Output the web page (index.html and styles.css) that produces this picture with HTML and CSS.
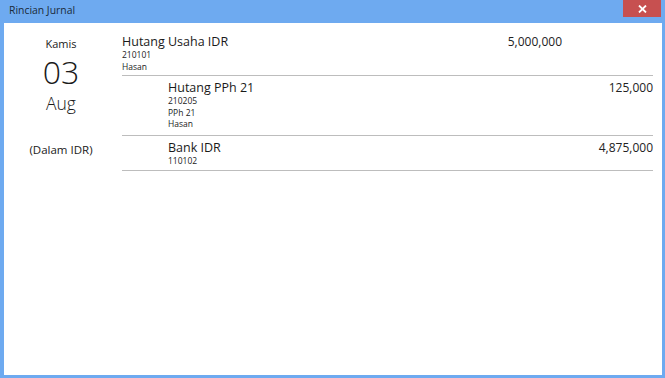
FILE: index.html
```html
<!DOCTYPE html>
<html lang="id">
<head>
  <meta charset="UTF-8">
  <title>Rincian Jurnal</title>
  <link rel="stylesheet" href="styles.css">
</head>
<body>
  <div class="window">
    <div class="title-bar">
      <span class="title">Rincian Jurnal</span>
      <button class="close" title="Tutup">
        <svg width="9" height="8" viewBox="0 0 9 8">
          <path d="M1 0.5 L8 7.5 M8 0.5 L1 7.5" stroke="#fff" stroke-width="1.8" fill="none"/>
        </svg>
      </button>
    </div>

    <div class="content">
      <div class="date">
        <div class="day-name">Kamis</div>
        <div class="day">03</div>
        <div class="month">Aug</div>
        <div class="currency">(Dalam IDR)</div>
      </div>

      <div class="entries">
        <div class="entry">
          <div class="account">
            <div class="name">Hutang Usaha IDR</div>
            <div class="sub">210101</div>
            <div class="sub">Hasan</div>
          </div>
          <div class="debit">5,000,000</div>
          <div class="credit"></div>
        </div>

        <div class="entry kredit">
          <div class="account">
            <div class="name">Hutang PPh 21</div>
            <div class="sub">210205</div>
            <div class="sub">PPh 21</div>
            <div class="sub">Hasan</div>
          </div>
          <div class="debit"></div>
          <div class="credit">125,000</div>
        </div>

        <div class="entry kredit">
          <div class="account">
            <div class="name">Bank IDR</div>
            <div class="sub">110102</div>
          </div>
          <div class="debit"></div>
          <div class="credit">4,875,000</div>
        </div>
      </div>
    </div>
  </div>
</body>
</html>
```

FILE: styles.css
```css
html, body {
  margin: 0;
  height: 100%;
}
body {
  font-family: 'Open Sans', 'Noto Sans', sans-serif;
  background: #6eaaf0;
  color: #111;
}
.window {
  display: flex;
  flex-direction: column;
  height: 100%;
}
.title-bar {
  height: 23px;
  display: flex;
  align-items: flex-start;
  justify-content: space-between;
  padding: 0 4px 0 9px;
  flex-shrink: 0;
}
.title {
  font-size: 10.4px;
  line-height: 20px;
  color: #1b2a3a;
}
.close {
  width: 38px;
  height: 17px;
  border: none;
  padding: 0;
  background: #c75050;
  display: flex;
  align-items: center;
  justify-content: center;
  cursor: pointer;
}
.content {
  flex: 1;
  background: #fff;
  margin: 0 3px 3px 4px;
  display: flex;
}
.date {
  width: 114px;
  text-align: center;
  padding-top: 14px;
  color: #1a1a1a;
}
.day-name {
  font-size: 11px;
  line-height: 14px;
}
.day {
  font-size: 32px;
  line-height: 42px;
  font-weight: 300;
}
.month {
  font-size: 17.5px;
  line-height: 20px;
  font-weight: 300;
}
.currency {
  margin-top: 30px;
  font-size: 11.5px;
  line-height: 14px;
}
.entries {
  margin-left: 4px;
  width: 531px;
  padding-top: 7px;
}
.entry {
  display: flex;
  align-items: baseline;
  padding: 3px 0 4px;
  border-bottom: 1px solid #bdbdbd;
}
.entry:first-child {
  padding-bottom: 3px;
}
.entry:nth-child(2) {
  padding-bottom: 5px;
}
.account {
  flex: 1;
}
.entry.kredit .account {
  padding-left: 46px;
}
.name {
  font-size: 12.5px;
  line-height: 15px;
  color: #1a1a1a;
}
.sub {
  font-size: 8.5px;
  line-height: 11.5px;
  color: #222;
}
.debit, .credit {
  width: 90px;
  text-align: right;
  font-size: 12px;
  color: #222;
}
.credit {
  width: 91px;
}
```
